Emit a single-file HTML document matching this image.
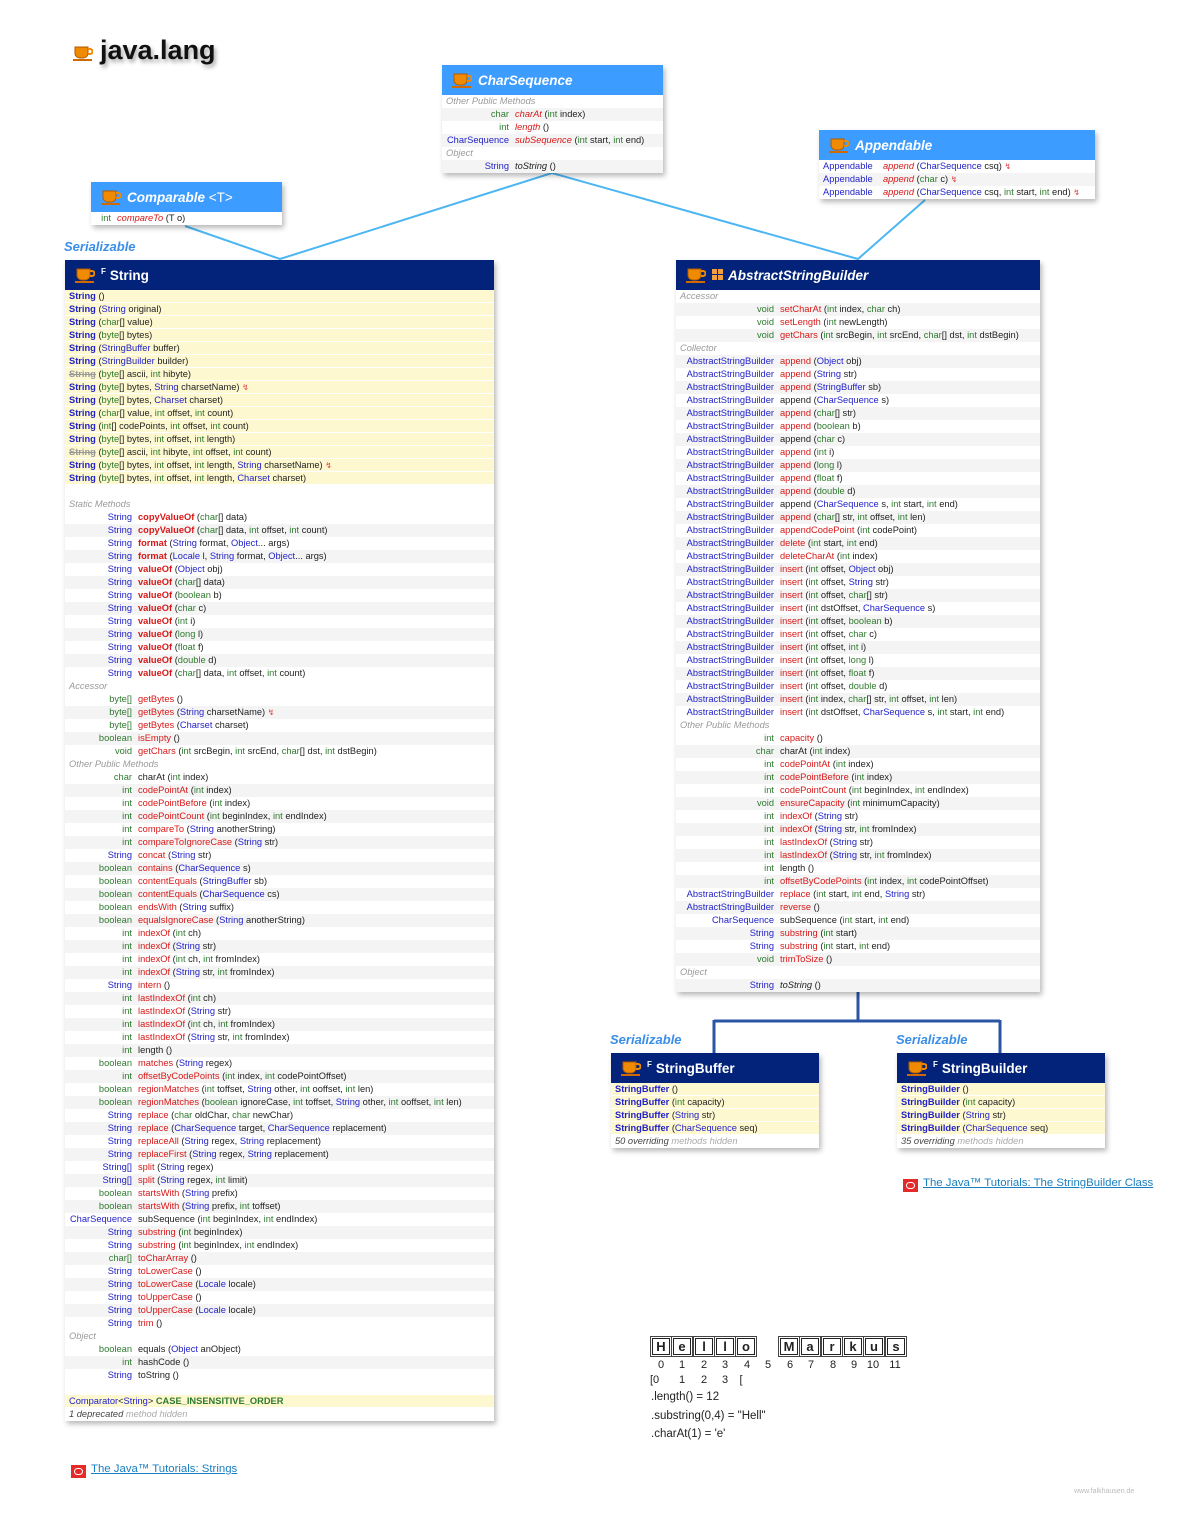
<!DOCTYPE html>
<html><head><meta charset="utf-8">
<style>
*{margin:0;padding:0;box-sizing:border-box}
body{width:1199px;height:1538px;background:#fff;position:relative;overflow:hidden;font-family:"Liberation Sans",sans-serif;font-size:9.3px;color:#222}
.box{position:absolute;background:#fff;box-shadow:2px 3px 5px rgba(0,0,0,.28)}
.hd{height:30px;color:#fff;font-weight:bold;font-size:13.5px;display:flex;align-items:center;padding-left:10px;white-space:nowrap}
.hd.d{background:#03237a}
.hd.l{background:#3d9cff;font-style:italic}
.hd svg{margin-right:6px}
.r{height:13px;line-height:13px;white-space:pre;padding-left:4px;display:block;overflow:hidden}
.r:nth-child(even){background:#f4f4f4}
.r.y{background:#fdf8cf;border-bottom:1px solid #fff;line-height:12px}
.r.lb{color:#9a9a9a;font-style:italic}
.r.e{background:#fff}
.t{display:inline-block;text-align:right;margin-right:6px;vertical-align:top}
.B{color:#2222c8}.G{color:#2f7a2f}.R{color:#d81818}.K{font-weight:bold}.I{font-style:italic}
.S{color:#999;text-decoration:line-through}
.z{color:#e04040;font-size:8px}
.ser{position:absolute;color:#3a8ee8;font-weight:bold;font-style:italic;font-size:13px}
a{color:#1a7fc0;text-decoration:underline;font-size:11.4px;position:absolute}
.ol{position:absolute;width:15px;height:13px;background:#e52a2a}
.ol:after{content:"";position:absolute;left:3px;top:3px;width:9px;height:7px;border:1.5px solid #fff;border-radius:4px;box-sizing:border-box}
.lt{position:absolute;width:18px;height:17px;border:1px solid #222;outline:1px solid #444;outline-offset:1px;font:bold 13px "Liberation Sans",sans-serif;text-align:center;line-height:15px;top:1338px}
.dg{position:absolute;top:1359px;font:11px "Liberation Sans",sans-serif;width:18px;text-align:center}
.tx{position:absolute;font:11.5px "Liberation Sans",sans-serif;left:651px}
.sm .t{width:63px}.ab .t{width:94px}
</style></head><body>
<svg width="0" height="0" style="position:absolute"><defs><g id="cup"><path d="M2 2h13v7a5 5 0 0 1-5 4h-3a5 5 0 0 1-5-4z" fill="#f08a00" stroke="#b05a00" stroke-width="1"/><path d="M15 4h2a2.5 2.5 0 0 1 0 5h-2" fill="none" stroke="#f08a00" stroke-width="2"/><rect x="0" y="14" width="19" height="2" fill="#d06a00"/></g></defs></svg>

<svg style="position:absolute;left:73px;top:45px" width="20" height="17"><use href="#cup"/></svg>
<div style="position:absolute;left:100px;top:35px;font-size:27px;font-weight:bold;color:#111;text-shadow:2px 3px 4px rgba(0,0,0,.35)">java.lang</div>

<svg style="position:absolute;left:0;top:0" width="1199" height="1538">
<g stroke="#4cb6f2" stroke-width="2" fill="none">
<path d="M185 226 L280 259 L552 173 L858 259 L925 200"/>
</g>
<g stroke="#2a55a5" stroke-width="3" fill="none">
<path d="M858 992 V1021 M714 1021 H1000 M714 1020 V1053 M1000 1020 V1053"/>
</g>
</svg>

<div class="box" style="left:442px;top:65px;width:221px">
<div class="hd l"><svg width="20" height="17"><use href="#cup"/></svg>CharSequence</div>
<div>
<div class="r lb e">Other Public Methods</div>
<div class="r"><span class="t G" style="width:63px">char</span><span class="R I">charAt</span> (<span class="G">int</span> index)</div>
<div class="r e"><span class="t G" style="width:63px">int</span><span class="R I">length</span> ()</div>
<div class="r"><span class="t B" style="width:63px">CharSequence</span><span class="R I">subSequence</span> (<span class="G">int</span> start, <span class="G">int</span> end)</div>
<div class="r lb e">Object</div>
<div class="r"><span class="t B" style="width:63px">String</span><span class="I">toString</span> ()</div>
</div></div>

<div class="box" style="left:819px;top:130px;width:276px">
<div class="hd l"><svg width="20" height="17"><use href="#cup"/></svg>Appendable</div>
<div>
<div class="r e"><span class="t B" style="width:54px;text-align:left">Appendable</span><span class="R I">append</span> (<span class="B">CharSequence</span> csq) <span class="z">↯</span></div>
<div class="r"><span class="t B" style="width:54px;text-align:left">Appendable</span><span class="R I">append</span> (<span class="G">char</span> c) <span class="z">↯</span></div>
<div class="r e"><span class="t B" style="width:54px;text-align:left">Appendable</span><span class="R I">append</span> (<span class="B">CharSequence</span> csq, <span class="G">int</span> start, <span class="G">int</span> end) <span class="z">↯</span></div>
</div></div>

<div class="box" style="left:91px;top:182px;width:191px">
<div class="hd l"><svg width="20" height="17"><use href="#cup"/></svg>Comparable&nbsp;<span style="font-style:normal;font-weight:normal">&lt;T&gt;</span></div>
<div><div class="r e" style="padding-left:8px"><span class="t G" style="width:12px">int</span><span class="R I">compareTo</span> (T o)</div></div>
</div>

<div class="ser" style="left:64px;top:239px">Serializable</div>

<div class="box" style="left:65px;top:260px;width:429px">
<div class="hd d"><svg width="20" height="17"><use href="#cup"/></svg><span style="font-size:8px;margin-right:4px;margin-top:-8px">F</span>String</div>
<div>
<div class="r y"><b class="B">String</b> ()</div>
<div class="r y"><b class="B">String</b> (<span class="B">String</span> original)</div>
<div class="r y"><b class="B">String</b> (<span class="G">char</span>[] value)</div>
<div class="r y"><b class="B">String</b> (<span class="G">byte</span>[] bytes)</div>
<div class="r y"><b class="B">String</b> (<span class="B">StringBuffer</span> buffer)</div>
<div class="r y"><b class="B">String</b> (<span class="B">StringBuilder</span> builder)</div>
<div class="r y"><b class="S">String</b> (<span class="G">byte</span>[] ascii, <span class="G">int</span> hibyte)</div>
<div class="r y"><b class="B">String</b> (<span class="G">byte</span>[] bytes, <span class="B">String</span> charsetName) <span class="z">↯</span></div>
<div class="r y"><b class="B">String</b> (<span class="G">byte</span>[] bytes, <span class="B">Charset</span> charset)</div>
<div class="r y"><b class="B">String</b> (<span class="G">char</span>[] value, <span class="G">int</span> offset, <span class="G">int</span> count)</div>
<div class="r y"><b class="B">String</b> (<span class="G">int</span>[] codePoints, <span class="G">int</span> offset, <span class="G">int</span> count)</div>
<div class="r y"><b class="B">String</b> (<span class="G">byte</span>[] bytes, <span class="G">int</span> offset, <span class="G">int</span> length)</div>
<div class="r y"><b class="S">String</b> (<span class="G">byte</span>[] ascii, <span class="G">int</span> hibyte, <span class="G">int</span> offset, <span class="G">int</span> count)</div>
<div class="r y"><b class="B">String</b> (<span class="G">byte</span>[] bytes, <span class="G">int</span> offset, <span class="G">int</span> length, <span class="B">String</span> charsetName) <span class="z">↯</span></div>
<div class="r y"><b class="B">String</b> (<span class="G">byte</span>[] bytes, <span class="G">int</span> offset, <span class="G">int</span> length, <span class="B">Charset</span> charset)</div>
<div class="r e"></div>
<div class="r lb e">Static Methods</div>
</div>
<div class="sm">
<div class="r"><span class="t B">String</span><b class="R">copyValueOf</b> (<span class="G">char</span>[] data)</div>
<div class="r"><span class="t B">String</span><b class="R">copyValueOf</b> (<span class="G">char</span>[] data, <span class="G">int</span> offset, <span class="G">int</span> count)</div>
<div class="r"><span class="t B">String</span><b class="R">format</b> (<span class="B">String</span> format, <span class="B">Object</span>... args)</div>
<div class="r"><span class="t B">String</span><b class="R">format</b> (<span class="B">Locale</span> l, <span class="B">String</span> format, <span class="B">Object</span>... args)</div>
<div class="r"><span class="t B">String</span><b class="R">valueOf</b> (<span class="B">Object</span> obj)</div>
<div class="r"><span class="t B">String</span><b class="R">valueOf</b> (<span class="G">char</span>[] data)</div>
<div class="r"><span class="t B">String</span><b class="R">valueOf</b> (<span class="G">boolean</span> b)</div>
<div class="r"><span class="t B">String</span><b class="R">valueOf</b> (<span class="G">char</span> c)</div>
<div class="r"><span class="t B">String</span><b class="R">valueOf</b> (<span class="G">int</span> i)</div>
<div class="r"><span class="t B">String</span><b class="R">valueOf</b> (<span class="G">long</span> l)</div>
<div class="r"><span class="t B">String</span><b class="R">valueOf</b> (<span class="G">float</span> f)</div>
<div class="r"><span class="t B">String</span><b class="R">valueOf</b> (<span class="G">double</span> d)</div>
<div class="r"><span class="t B">String</span><b class="R">valueOf</b> (<span class="G">char</span>[] data, <span class="G">int</span> offset, <span class="G">int</span> count)</div>
<div class="r lb e">Accessor</div>
<div class="r"><span class="t G">byte[]</span><span class="R">getBytes</span> ()</div>
<div class="r"><span class="t G">byte[]</span><span class="R">getBytes</span> (<span class="B">String</span> charsetName) <span class="z">↯</span></div>
<div class="r"><span class="t G">byte[]</span><span class="R">getBytes</span> (<span class="B">Charset</span> charset)</div>
<div class="r"><span class="t G">boolean</span><span class="R">isEmpty</span> ()</div>
<div class="r"><span class="t G">void</span><span class="R">getChars</span> (<span class="G">int</span> srcBegin, <span class="G">int</span> srcEnd, <span class="G">char</span>[] dst, <span class="G">int</span> dstBegin)</div>
<div class="r lb e">Other Public Methods</div>
<div class="r"><span class="t G">char</span>charAt (<span class="G">int</span> index)</div>
<div class="r"><span class="t G">int</span><span class="R">codePointAt</span> (<span class="G">int</span> index)</div>
<div class="r"><span class="t G">int</span><span class="R">codePointBefore</span> (<span class="G">int</span> index)</div>
<div class="r"><span class="t G">int</span><span class="R">codePointCount</span> (<span class="G">int</span> beginIndex, <span class="G">int</span> endIndex)</div>
<div class="r"><span class="t G">int</span><span class="R">compareTo</span> (<span class="B">String</span> anotherString)</div>
<div class="r"><span class="t G">int</span><span class="R">compareToIgnoreCase</span> (<span class="B">String</span> str)</div>
<div class="r"><span class="t B">String</span><span class="R">concat</span> (<span class="B">String</span> str)</div>
<div class="r"><span class="t G">boolean</span><span class="R">contains</span> (<span class="B">CharSequence</span> s)</div>
<div class="r"><span class="t G">boolean</span><span class="R">contentEquals</span> (<span class="B">StringBuffer</span> sb)</div>
<div class="r"><span class="t G">boolean</span><span class="R">contentEquals</span> (<span class="B">CharSequence</span> cs)</div>
<div class="r"><span class="t G">boolean</span><span class="R">endsWith</span> (<span class="B">String</span> suffix)</div>
<div class="r"><span class="t G">boolean</span><span class="R">equalsIgnoreCase</span> (<span class="B">String</span> anotherString)</div>
<div class="r"><span class="t G">int</span><span class="R">indexOf</span> (<span class="G">int</span> ch)</div>
<div class="r"><span class="t G">int</span><span class="R">indexOf</span> (<span class="B">String</span> str)</div>
<div class="r"><span class="t G">int</span><span class="R">indexOf</span> (<span class="G">int</span> ch, <span class="G">int</span> fromIndex)</div>
<div class="r"><span class="t G">int</span><span class="R">indexOf</span> (<span class="B">String</span> str, <span class="G">int</span> fromIndex)</div>
<div class="r"><span class="t B">String</span><span class="R">intern</span> ()</div>
<div class="r"><span class="t G">int</span><span class="R">lastIndexOf</span> (<span class="G">int</span> ch)</div>
<div class="r"><span class="t G">int</span><span class="R">lastIndexOf</span> (<span class="B">String</span> str)</div>
<div class="r"><span class="t G">int</span><span class="R">lastIndexOf</span> (<span class="G">int</span> ch, <span class="G">int</span> fromIndex)</div>
<div class="r"><span class="t G">int</span><span class="R">lastIndexOf</span> (<span class="B">String</span> str, <span class="G">int</span> fromIndex)</div>
<div class="r"><span class="t G">int</span>length ()</div>
<div class="r"><span class="t G">boolean</span><span class="R">matches</span> (<span class="B">String</span> regex)</div>
<div class="r"><span class="t G">int</span><span class="R">offsetByCodePoints</span> (<span class="G">int</span> index, <span class="G">int</span> codePointOffset)</div>
<div class="r"><span class="t G">boolean</span><span class="R">regionMatches</span> (<span class="G">int</span> toffset, <span class="B">String</span> other, <span class="G">int</span> ooffset, <span class="G">int</span> len)</div>
<div class="r"><span class="t G">boolean</span><span class="R">regionMatches</span> (<span class="G">boolean</span> ignoreCase, <span class="G">int</span> toffset, <span class="B">String</span> other, <span class="G">int</span> ooffset, <span class="G">int</span> len)</div>
<div class="r"><span class="t B">String</span><span class="R">replace</span> (<span class="G">char</span> oldChar, <span class="G">char</span> newChar)</div>
<div class="r"><span class="t B">String</span><span class="R">replace</span> (<span class="B">CharSequence</span> target, <span class="B">CharSequence</span> replacement)</div>
<div class="r"><span class="t B">String</span><span class="R">replaceAll</span> (<span class="B">String</span> regex, <span class="B">String</span> replacement)</div>
<div class="r"><span class="t B">String</span><span class="R">replaceFirst</span> (<span class="B">String</span> regex, <span class="B">String</span> replacement)</div>
<div class="r"><span class="t B">String[]</span><span class="R">split</span> (<span class="B">String</span> regex)</div>
<div class="r"><span class="t B">String[]</span><span class="R">split</span> (<span class="B">String</span> regex, <span class="G">int</span> limit)</div>
<div class="r"><span class="t G">boolean</span><span class="R">startsWith</span> (<span class="B">String</span> prefix)</div>
<div class="r"><span class="t G">boolean</span><span class="R">startsWith</span> (<span class="B">String</span> prefix, <span class="G">int</span> toffset)</div>
<div class="r"><span class="t B">CharSequence</span>subSequence (<span class="G">int</span> beginIndex, <span class="G">int</span> endIndex)</div>
<div class="r"><span class="t B">String</span><span class="R">substring</span> (<span class="G">int</span> beginIndex)</div>
<div class="r"><span class="t B">String</span><span class="R">substring</span> (<span class="G">int</span> beginIndex, <span class="G">int</span> endIndex)</div>
<div class="r"><span class="t G">char[]</span><span class="R">toCharArray</span> ()</div>
<div class="r"><span class="t B">String</span><span class="R">toLowerCase</span> ()</div>
<div class="r"><span class="t B">String</span><span class="R">toLowerCase</span> (<span class="B">Locale</span> locale)</div>
<div class="r"><span class="t B">String</span><span class="R">toUpperCase</span> ()</div>
<div class="r"><span class="t B">String</span><span class="R">toUpperCase</span> (<span class="B">Locale</span> locale)</div>
<div class="r"><span class="t B">String</span><span class="R">trim</span> ()</div>
<div class="r lb e">Object</div>
<div class="r"><span class="t G">boolean</span>equals (<span class="B">Object</span> anObject)</div>
<div class="r"><span class="t G">int</span>hashCode ()</div>
<div class="r"><span class="t B">String</span>toString ()</div>
<div class="r e"></div>
<div class="r y"><span class="B">Comparator</span>&lt;<span class="B">String</span>&gt; <b class="G">CASE_INSENSITIVE_ORDER</b></div>
<div class="r e I" style="color:#444">1 deprecated <span style="color:#aaa">method hidden</span></div>
</div></div>

<div class="box ab" style="left:676px;top:260px;width:364px">
<div class="hd d" style="font-style:italic"><svg width="20" height="17"><use href="#cup"/></svg><svg width="12" height="12" style="margin-right:4px"><rect x="0" y="0" width="5" height="5" fill="#f0a040"/><rect x="6" y="0" width="5" height="5" fill="#f0a040"/><rect x="0" y="6" width="5" height="5" fill="#f0a040"/><rect x="6" y="6" width="5" height="5" fill="#f0a040"/></svg>AbstractStringBuilder</div>
<div>
<div class="r lb e">Accessor</div>
<div class="r"><span class="t G">void</span><span class="R">setCharAt</span> (<span class="G">int</span> index, <span class="G">char</span> ch)</div>
<div class="r"><span class="t G">void</span><span class="R">setLength</span> (<span class="G">int</span> newLength)</div>
<div class="r"><span class="t G">void</span><span class="R">getChars</span> (<span class="G">int</span> srcBegin, <span class="G">int</span> srcEnd, <span class="G">char</span>[] dst, <span class="G">int</span> dstBegin)</div>
<div class="r lb e">Collector</div>
<div class="r"><span class="t B">AbstractStringBuilder</span><span class="R">append</span> (<span class="B">Object</span> obj)</div>
<div class="r"><span class="t B">AbstractStringBuilder</span><span class="R">append</span> (<span class="B">String</span> str)</div>
<div class="r"><span class="t B">AbstractStringBuilder</span><span class="R">append</span> (<span class="B">StringBuffer</span> sb)</div>
<div class="r"><span class="t B">AbstractStringBuilder</span>append (<span class="B">CharSequence</span> s)</div>
<div class="r"><span class="t B">AbstractStringBuilder</span><span class="R">append</span> (<span class="G">char</span>[] str)</div>
<div class="r"><span class="t B">AbstractStringBuilder</span><span class="R">append</span> (<span class="G">boolean</span> b)</div>
<div class="r"><span class="t B">AbstractStringBuilder</span>append (<span class="G">char</span> c)</div>
<div class="r"><span class="t B">AbstractStringBuilder</span><span class="R">append</span> (<span class="G">int</span> i)</div>
<div class="r"><span class="t B">AbstractStringBuilder</span><span class="R">append</span> (<span class="G">long</span> l)</div>
<div class="r"><span class="t B">AbstractStringBuilder</span><span class="R">append</span> (<span class="G">float</span> f)</div>
<div class="r"><span class="t B">AbstractStringBuilder</span><span class="R">append</span> (<span class="G">double</span> d)</div>
<div class="r"><span class="t B">AbstractStringBuilder</span>append (<span class="B">CharSequence</span> s, <span class="G">int</span> start, <span class="G">int</span> end)</div>
<div class="r"><span class="t B">AbstractStringBuilder</span><span class="R">append</span> (<span class="G">char</span>[] str, <span class="G">int</span> offset, <span class="G">int</span> len)</div>
<div class="r"><span class="t B">AbstractStringBuilder</span><span class="R">appendCodePoint</span> (<span class="G">int</span> codePoint)</div>
<div class="r"><span class="t B">AbstractStringBuilder</span><span class="R">delete</span> (<span class="G">int</span> start, <span class="G">int</span> end)</div>
<div class="r"><span class="t B">AbstractStringBuilder</span><span class="R">deleteCharAt</span> (<span class="G">int</span> index)</div>
<div class="r"><span class="t B">AbstractStringBuilder</span><span class="R">insert</span> (<span class="G">int</span> offset, <span class="B">Object</span> obj)</div>
<div class="r"><span class="t B">AbstractStringBuilder</span><span class="R">insert</span> (<span class="G">int</span> offset, <span class="B">String</span> str)</div>
<div class="r"><span class="t B">AbstractStringBuilder</span><span class="R">insert</span> (<span class="G">int</span> offset, <span class="G">char</span>[] str)</div>
<div class="r"><span class="t B">AbstractStringBuilder</span><span class="R">insert</span> (<span class="G">int</span> dstOffset, <span class="B">CharSequence</span> s)</div>
<div class="r"><span class="t B">AbstractStringBuilder</span><span class="R">insert</span> (<span class="G">int</span> offset, <span class="G">boolean</span> b)</div>
<div class="r"><span class="t B">AbstractStringBuilder</span><span class="R">insert</span> (<span class="G">int</span> offset, <span class="G">char</span> c)</div>
<div class="r"><span class="t B">AbstractStringBuilder</span><span class="R">insert</span> (<span class="G">int</span> offset, <span class="G">int</span> i)</div>
<div class="r"><span class="t B">AbstractStringBuilder</span><span class="R">insert</span> (<span class="G">int</span> offset, <span class="G">long</span> l)</div>
<div class="r"><span class="t B">AbstractStringBuilder</span><span class="R">insert</span> (<span class="G">int</span> offset, <span class="G">float</span> f)</div>
<div class="r"><span class="t B">AbstractStringBuilder</span><span class="R">insert</span> (<span class="G">int</span> offset, <span class="G">double</span> d)</div>
<div class="r"><span class="t B">AbstractStringBuilder</span><span class="R">insert</span> (<span class="G">int</span> index, <span class="G">char</span>[] str, <span class="G">int</span> offset, <span class="G">int</span> len)</div>
<div class="r"><span class="t B">AbstractStringBuilder</span><span class="R">insert</span> (<span class="G">int</span> dstOffset, <span class="B">CharSequence</span> s, <span class="G">int</span> start, <span class="G">int</span> end)</div>
<div class="r lb e">Other Public Methods</div>
<div class="r"><span class="t G">int</span><span class="R">capacity</span> ()</div>
<div class="r"><span class="t G">char</span>charAt (<span class="G">int</span> index)</div>
<div class="r"><span class="t G">int</span><span class="R">codePointAt</span> (<span class="G">int</span> index)</div>
<div class="r"><span class="t G">int</span><span class="R">codePointBefore</span> (<span class="G">int</span> index)</div>
<div class="r"><span class="t G">int</span><span class="R">codePointCount</span> (<span class="G">int</span> beginIndex, <span class="G">int</span> endIndex)</div>
<div class="r"><span class="t G">void</span><span class="R">ensureCapacity</span> (<span class="G">int</span> minimumCapacity)</div>
<div class="r"><span class="t G">int</span><span class="R">indexOf</span> (<span class="B">String</span> str)</div>
<div class="r"><span class="t G">int</span><span class="R">indexOf</span> (<span class="B">String</span> str, <span class="G">int</span> fromIndex)</div>
<div class="r"><span class="t G">int</span><span class="R">lastIndexOf</span> (<span class="B">String</span> str)</div>
<div class="r"><span class="t G">int</span><span class="R">lastIndexOf</span> (<span class="B">String</span> str, <span class="G">int</span> fromIndex)</div>
<div class="r"><span class="t G">int</span>length ()</div>
<div class="r"><span class="t G">int</span><span class="R">offsetByCodePoints</span> (<span class="G">int</span> index, <span class="G">int</span> codePointOffset)</div>
<div class="r"><span class="t B">AbstractStringBuilder</span><span class="R">replace</span> (<span class="G">int</span> start, <span class="G">int</span> end, <span class="B">String</span> str)</div>
<div class="r"><span class="t B">AbstractStringBuilder</span><span class="R">reverse</span> ()</div>
<div class="r"><span class="t B">CharSequence</span>subSequence (<span class="G">int</span> start, <span class="G">int</span> end)</div>
<div class="r"><span class="t B">String</span><span class="R">substring</span> (<span class="G">int</span> start)</div>
<div class="r"><span class="t B">String</span><span class="R">substring</span> (<span class="G">int</span> start, <span class="G">int</span> end)</div>
<div class="r"><span class="t G">void</span><span class="R">trimToSize</span> ()</div>
<div class="r lb e">Object</div>
<div class="r"><span class="t B">String</span><span class="I">toString</span> ()</div>
</div></div>

<div class="ser" style="left:610px;top:1032px">Serializable</div>
<div class="ser" style="left:896px;top:1032px">Serializable</div>

<div class="box" style="left:611px;top:1053px;width:208px">
<div class="hd d"><svg width="20" height="17"><use href="#cup"/></svg><span style="font-size:8px;margin-right:4px;margin-top:-8px">F</span>StringBuffer</div>
<div>
<div class="r y"><b class="B">StringBuffer</b> ()</div>
<div class="r y"><b class="B">StringBuffer</b> (<span class="G">int</span> capacity)</div>
<div class="r y"><b class="B">StringBuffer</b> (<span class="B">String</span> str)</div>
<div class="r y"><b class="B">StringBuffer</b> (<span class="B">CharSequence</span> seq)</div>
<div class="r e I" style="color:#444">50 overriding <span style="color:#aaa">methods hidden</span></div>
</div></div>

<div class="box" style="left:897px;top:1053px;width:208px">
<div class="hd d"><svg width="20" height="17"><use href="#cup"/></svg><span style="font-size:8px;margin-right:4px;margin-top:-8px">F</span>StringBuilder</div>
<div>
<div class="r y"><b class="B">StringBuilder</b> ()</div>
<div class="r y"><b class="B">StringBuilder</b> (<span class="G">int</span> capacity)</div>
<div class="r y"><b class="B">StringBuilder</b> (<span class="B">String</span> str)</div>
<div class="r y"><b class="B">StringBuilder</b> (<span class="B">CharSequence</span> seq)</div>
<div class="r e I" style="color:#444">35 overriding <span style="color:#aaa">methods hidden</span></div>
</div></div>

<div class="ol" style="left:903px;top:1179px"></div>
<a style="left:923px;top:1177px">The Java™ Tutorials: The StringBuilder Class</a>
<div class="ol" style="left:71px;top:1465px"></div>
<a style="left:91px;top:1463px">The Java™ Tutorials: Strings</a>
<div style="position:absolute;left:1074px;top:1488px;font-size:7px;color:#bbb">www.falkhausen.de</div>

<div class="lt" style="left:652px">H</div>
<div class="lt" style="left:673px">e</div>
<div class="lt" style="left:695px">l</div>
<div class="lt" style="left:716px">l</div>
<div class="lt" style="left:737px">o</div>
<div class="lt" style="left:780px">M</div>
<div class="lt" style="left:801px">a</div>
<div class="lt" style="left:823px">r</div>
<div class="lt" style="left:844px">k</div>
<div class="lt" style="left:865px">u</div>
<div class="lt" style="left:887px">s</div>
<div class="dg" style="left:652px">0</div><div class="dg" style="left:673px">1</div><div class="dg" style="left:695px">2</div><div class="dg" style="left:716px">3</div><div class="dg" style="left:738px">4</div><div class="dg" style="left:759px">5</div><div class="dg" style="left:781px">6</div><div class="dg" style="left:802px">7</div><div class="dg" style="left:824px">8</div><div class="dg" style="left:845px">9</div><div class="dg" style="left:864px">10</div><div class="dg" style="left:886px">11</div>
<div class="dg" style="left:650px;top:1374px;width:auto">[0</div><div class="dg" style="left:673px;top:1374px">1</div><div class="dg" style="left:695px;top:1374px">2</div><div class="dg" style="left:716px;top:1374px">3</div><div class="dg" style="left:732px;top:1374px">[</div>
<div class="tx" style="top:1391px">.length() = 12</div>
<div class="tx" style="top:1410px">.substring(0,4) = "Hell"</div>
<div class="tx" style="top:1428px">.charAt(1) = 'e'</div>
</body></html>
